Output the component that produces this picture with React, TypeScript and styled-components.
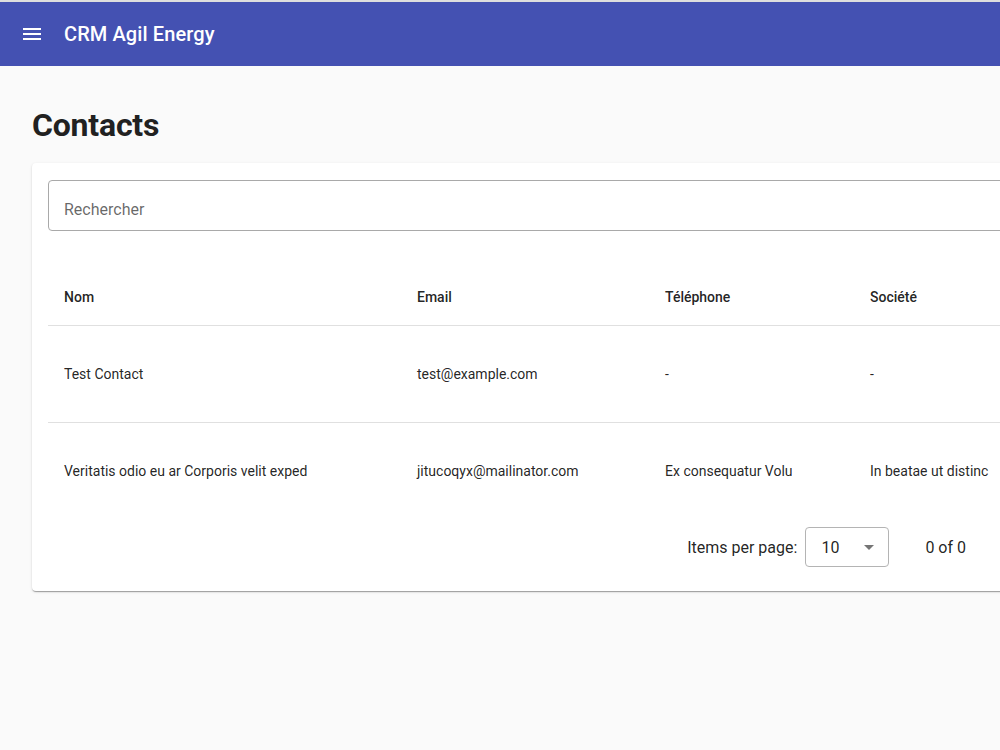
import React from 'react';
import styled, { createGlobalStyle } from 'styled-components';

const GlobalStyle = createGlobalStyle`
  html, body {
    margin: 0;
    padding: 0;
    overflow-x: hidden;
  }
  body {
    background: #fafafa;
    font-family: Roboto, "Liberation Sans", Arial, sans-serif;
    color: rgba(0, 0, 0, 0.87);
    border-top: 2px solid #dedede;
  }
`;

const Toolbar = styled.header`
  height: 64px;
  background: #4451b2;
  color: #fff;
  display: flex;
  align-items: center;
  padding: 0 16px;
  box-sizing: border-box;
`;

const MenuButton = styled.button`
  width: 32px;
  height: 40px;
  border: none;
  background: transparent;
  color: #fff;
  display: flex;
  align-items: center;
  justify-content: center;
  padding: 0;
  margin-right: 16px;
`;

const AppTitle = styled.span`
  font-size: 20px;
  font-weight: 500;
  letter-spacing: 0.1px;
`;

const Main = styled.main`
  padding: 32px 32px;
`;

const PageTitle = styled.h1`
  margin: 7px 0 18px;
  font-size: 32px;
  line-height: 40px;
  font-weight: 700;
  color: #212121;
  letter-spacing: -0.2px;
`;

const Card = styled.section`
  width: 1070px;
  background: #fff;
  border-radius: 4px;
  box-shadow: 0 2px 1px -1px rgba(0, 0, 0, 0.2), 0 1px 1px 0 rgba(0, 0, 0, 0.14),
    0 1px 3px 0 rgba(0, 0, 0, 0.12);
  padding: 16px;
  box-sizing: border-box;
`;

const SearchField = styled.input`
  display: block;
  width: 100%;
  height: 51px;
  margin: 1px 0 38px;
  box-sizing: border-box;
  border: 1px solid #a9a9a9;
  border-radius: 4px;
  padding: 7px 15px 0;
  font-family: inherit;
  font-size: 16px;
  color: rgba(0, 0, 0, 0.87);
  background: #fff;
  outline: none;
  &::placeholder {
    color: rgba(0, 0, 0, 0.6);
  }
`;

const Table = styled.table`
  width: 100%;
  border-collapse: collapse;
  table-layout: fixed;
`;

const HeadCell = styled.th<{ $w?: number }>`
  width: ${p => (p.$w ? `${p.$w}px` : 'auto')};
  height: 56px;
  padding: 0 16px;
  text-align: left;
  font-size: 14px;
  font-weight: 500;
  color: rgba(0, 0, 0, 0.87);
  border-bottom: 1px solid rgba(0, 0, 0, 0.12);
  box-sizing: border-box;
`;

const Row = styled.tr<{ $last?: boolean }>`
  height: 97px;
  & > td {
    border-bottom: ${p => (p.$last ? 'none' : '1px solid rgba(0, 0, 0, 0.12)')};
  }
`;

const Cell = styled.td`
  padding: 0 16px;
  font-size: 14px;
  color: rgba(0, 0, 0, 0.87);
  white-space: nowrap;
  overflow: hidden;
`;

const Paginator = styled.div`
  height: 56px;
  display: flex;
  align-items: center;
  justify-content: flex-end;
  padding: 0 8px;
  font-size: 16px;
  color: rgba(0, 0, 0, 0.87);
`;

const PageSizeLabel = styled.span`
  margin: 0 4px;
`;

const PageSizeSelect = styled.div`
  width: 84px;
  height: 40px;
  margin: 0 4px;
  box-sizing: border-box;
  border: 1px solid #b4b4b4;
  border-radius: 4px;
  display: flex;
  align-items: center;
  justify-content: space-between;
  padding: 0 14px 0 15px;
`;

const Arrow = styled.span`
  width: 0;
  height: 0;
  border-left: 5px solid transparent;
  border-right: 5px solid transparent;
  border-top: 5px solid rgba(0, 0, 0, 0.54);
`;

const RangeLabel = styled.span`
  margin: 0 32px 0 32px;
`;

const NavButton = styled.button`
  width: 40px;
  height: 40px;
  border: none;
  background: transparent;
  display: flex;
  align-items: center;
  justify-content: center;
  color: rgba(0, 0, 0, 0.26);
  padding: 0;
`;

const contacts = [
  { name: 'Test Contact', email: 'test@example.com', phone: '-', company: '-' },
  {
    name: 'Veritatis odio eu ar Corporis velit exped',
    email: 'jitucoqyx@mailinator.com',
    phone: 'Ex consequatur Volu',
    company: 'In beatae ut distinc',
  },
];

const App: React.FC = () => (
  <>
    <GlobalStyle />
    <Toolbar>
      <MenuButton aria-label="menu">
        <svg width="18" height="12" viewBox="0 0 18 12">
          <rect y="0" width="18" height="2" fill="currentColor" />
          <rect y="5" width="18" height="2" fill="currentColor" />
          <rect y="10" width="18" height="2" fill="currentColor" />
        </svg>
      </MenuButton>
      <AppTitle>CRM Agil Energy</AppTitle>
    </Toolbar>
    <Main>
      <PageTitle>Contacts</PageTitle>
      <Card>
        <SearchField placeholder="Rechercher" />
        <Table>
          <thead>
            <tr>
              <HeadCell $w={353}>Nom</HeadCell>
              <HeadCell $w={248}>Email</HeadCell>
              <HeadCell $w={205}>Téléphone</HeadCell>
              <HeadCell>Société</HeadCell>
            </tr>
          </thead>
          <tbody>
            {contacts.map((c, i) => (
              <Row key={c.email} $last={i === contacts.length - 1}>
                <Cell>{c.name}</Cell>
                <Cell>{c.email}</Cell>
                <Cell>{c.phone}</Cell>
                <Cell>{c.company}</Cell>
              </Row>
            ))}
          </tbody>
        </Table>
        <Paginator>
          <PageSizeLabel>Items per page:</PageSizeLabel>
          <PageSizeSelect>
            10
            <Arrow />
          </PageSizeSelect>
          <RangeLabel>0 of 0</RangeLabel>
          <NavButton aria-label="previous">
            <svg width="24" height="24" viewBox="0 0 24 24">
              <path d="M15.41 7.41L14 6l-6 6 6 6 1.41-1.41L10.83 12z" fill="currentColor" />
            </svg>
          </NavButton>
          <NavButton aria-label="next">
            <svg width="24" height="24" viewBox="0 0 24 24">
              <path d="M10 6L8.59 7.41 13.17 12l-4.58 4.59L10 18l6-6z" fill="currentColor" />
            </svg>
          </NavButton>
        </Paginator>
      </Card>
    </Main>
  </>
);

export default App;
